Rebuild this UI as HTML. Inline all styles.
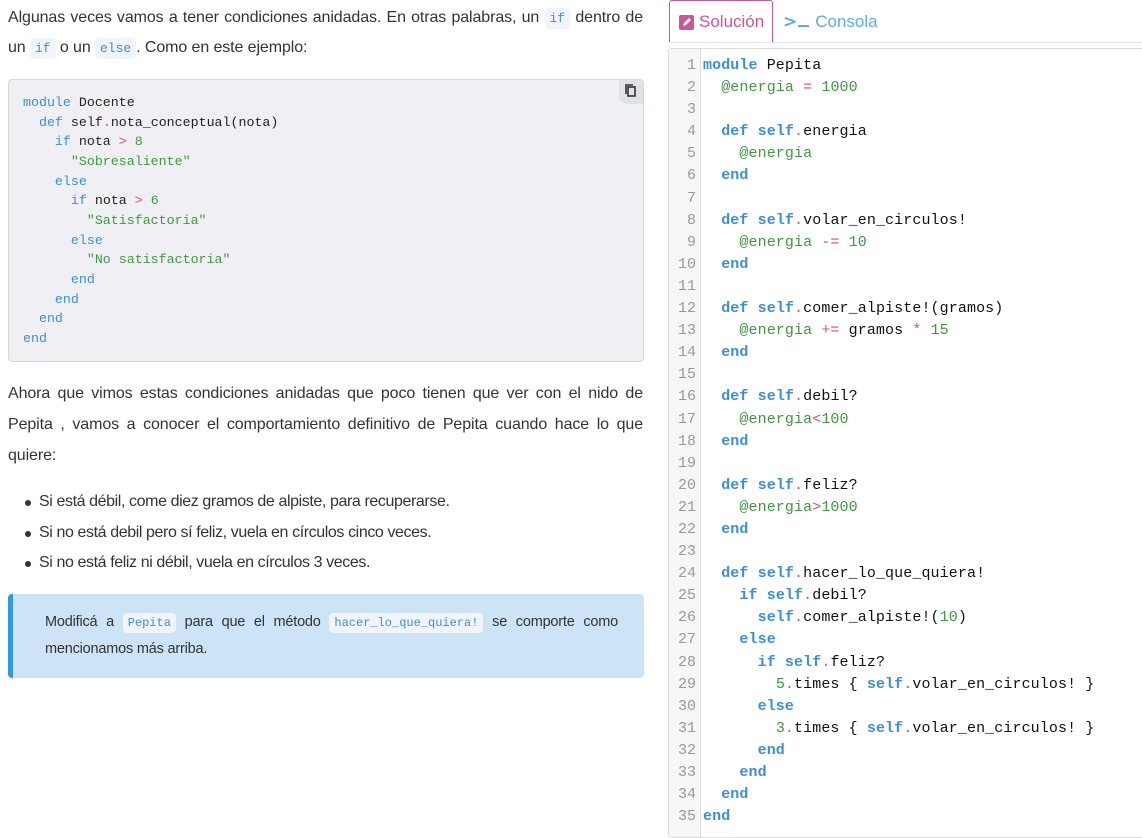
<!DOCTYPE html>
<html><head><meta charset="utf-8"><style>
*{margin:0;padding:0;box-sizing:border-box}
body{width:1142px;height:826px;overflow:hidden;background:#fff;font-family:"Liberation Sans",sans-serif;color:#333;position:relative}
.l{position:absolute;left:8px;width:635px;font-size:16px;letter-spacing:-0.1px;white-space:nowrap;line-height:20px}
.j{text-align:justify;text-align-last:justify;white-space:normal}
code.i{font-family:"Liberation Mono",monospace;font-size:13px;color:#3a8fd8;background:#f1f4f9;padding:3px 5px;border-radius:4px;letter-spacing:0}
.cb{position:absolute;left:8px;top:79px;width:636px;height:283px;background:#f0f0f4;border:1px solid #d6d8dc;border-radius:4px}
.cb pre{position:absolute;left:14px;top:13px;font-family:"Liberation Mono",monospace;font-size:13.3px;line-height:19.67px;color:#222}
.k{color:#3a8fd8}.s{color:#3d9a3d}.o{color:#e8457a}.n{color:#3d9a3d}
.ed pre .k{font-weight:bold}
.copy{position:absolute;right:0;top:0;width:24px;height:24px;background:#dfe2e6;border-bottom-left-radius:8px}
ul{position:absolute;left:24px;top:491px;list-style:none}
ul li{font-size:16px;letter-spacing:-0.4px;height:30.5px;line-height:22px;position:relative;padding-left:15px}
ul li:before{content:"";position:absolute;left:1px;top:9px;width:6px;height:6px;border-radius:50%;background:#333}
.call{position:absolute;left:8px;top:594px;width:636px;height:84px;background:#cce4f6;border-left:5px solid #3498db;border-radius:4px}
.call .t{position:absolute;left:32px;width:573px;font-size:14.5px;letter-spacing:-0.2px;color:#333}
.tab{position:absolute;left:669px;top:0;width:104px;height:43px;border:1px solid #c9579a;border-top-left-radius:3px;border-top-right-radius:3px;color:#c9579a;font-size:17px;background:#fff}
.hl{position:absolute;left:669px;right:0;top:42px;height:1px;background:#e5e5e5}
.ed{position:absolute;left:668px;top:48px;width:480px;height:790px;border:1px solid #ddd;border-radius:3px;background:#fff}
.gut{position:absolute;left:0;top:0;width:32px;height:100%;background:#f7f7f7;border-right:1px solid #ddd}
.gut pre{font-family:"Liberation Mono",monospace;font-size:15px;line-height:22.1px;color:#999;text-align:right;padding-right:4px;position:absolute;right:0;top:6px}
.ed>pre{position:absolute;left:34px;top:6px;font-family:"Liberation Mono",monospace;font-size:15px;letter-spacing:0.1px;line-height:22.1px;color:#111}
</style></head><body>
<div class="l j" style="top:8px">Algunas veces vamos a tener condiciones anidadas. En otras palabras, un <code class="i">if</code> dentro de</div>
<div class="l" style="top:38px">un <code class="i">if</code> o un <code class="i">else</code>. Como en este ejemplo:</div>
<div class="cb"><div class="copy"><svg width="24" height="24" viewBox="0 0 24 24"><rect x="9" y="7" width="7" height="9" fill="none" stroke="#333" stroke-width="1.6"/><path d="M7 14V5h7" fill="none" stroke="#333" stroke-width="1.6"/></svg></div>
<pre><span class="k">module</span> Docente
  <span class="k">def</span> self<span class="o">.</span>nota_conceptual(nota)
    <span class="k">if</span> nota <span class="o">&gt;</span> <span class="n">8</span>
      <span class="s">"Sobresaliente"</span>
    <span class="k">else</span>
      <span class="k">if</span> nota <span class="o">&gt;</span> <span class="n">6</span>
        <span class="s">"Satisfactoria"</span>
      <span class="k">else</span>
        <span class="s">"No satisfactoria"</span>
      <span class="k">end</span>
    <span class="k">end</span>
  <span class="k">end</span>
<span class="k">end</span></pre></div>
<div class="l j" style="top:384px">Ahora que vimos estas condiciones anidadas que poco tienen que ver con el nido de</div>
<div class="l j" style="top:415px">Pepita , vamos a conocer el comportamiento definitivo de Pepita cuando hace lo que</div>
<div class="l" style="top:446px">quiere:</div>
<ul><li>Si está débil, come diez gramos de alpiste, para recuperarse.</li><li>Si no está debil pero sí feliz, vuela en círculos cinco veces.</li><li>Si no está feliz ni débil, vuela en círculos 3 veces.</li></ul>
<div class="call"><div class="t" style="top:20px;text-align:justify;text-align-last:justify">Modificá a <code class="i" style="font-size:12px">Pepita</code> para que el método <code class="i" style="font-size:12px">hacer_lo_que_quiera!</code> se comporte como</div><div class="t" style="top:47px">mencionamos más arriba.</div></div>
<div class="tab"><svg style="position:absolute;left:9px;top:14px" width="15" height="15" viewBox="0 0 15 15"><rect width="15" height="15" rx="2" fill="#c9579a"/><path d="M4 11l1-3 5-5 2 2-5 5z" fill="#fff"/></svg><span style="position:absolute;left:29px;top:11px">Solución</span></div>
<div style="position:absolute;left:783px;top:12px;color:#5dade2;font-size:17px"><span style="font-weight:bold;font-family:'DejaVu Sans',sans-serif">&gt;</span><span style="display:inline-block;width:11px;height:2px;background:#5dade2;margin:0 6px 0 1px"></span>Consola</div>
<div class="hl"></div>
<div class="ed"><div class="gut"><pre>1
2
3
4
5
6
7
8
9
10
11
12
13
14
15
16
17
18
19
20
21
22
23
24
25
26
27
28
29
30
31
32
33
34
35</pre></div>
<pre><span class="k">module</span> Pepita
  <span class="s">@energia</span> <span class="o">=</span> <span class="n">1000</span>

  <span class="k">def</span> <span class="k">self</span><span class="o">.</span>energia
    <span class="s">@energia</span>
  <span class="k">end</span>

  <span class="k">def</span> <span class="k">self</span><span class="o">.</span>volar_en_circulos!
    <span class="s">@energia</span> <span class="o">-=</span> <span class="n">10</span>
  <span class="k">end</span>

  <span class="k">def</span> <span class="k">self</span><span class="o">.</span>comer_alpiste!(gramos)
    <span class="s">@energia</span> <span class="o">+=</span> gramos <span class="o">*</span> <span class="n">15</span>
  <span class="k">end</span>

  <span class="k">def</span> <span class="k">self</span><span class="o">.</span>debil?
    <span class="s">@energia</span><span class="o">&lt;</span><span class="n">100</span>
  <span class="k">end</span>

  <span class="k">def</span> <span class="k">self</span><span class="o">.</span>feliz?
    <span class="s">@energia</span><span class="o">&gt;</span><span class="n">1000</span>
  <span class="k">end</span>

  <span class="k">def</span> <span class="k">self</span><span class="o">.</span>hacer_lo_que_quiera!
    <span class="k">if</span> <span class="k">self</span><span class="o">.</span>debil?
      <span class="k">self</span><span class="o">.</span>comer_alpiste!(<span class="n">10</span>)
    <span class="k">else</span>
      <span class="k">if</span> <span class="k">self</span><span class="o">.</span>feliz?
        <span class="n">5</span><span class="o">.</span>times { <span class="k">self</span><span class="o">.</span>volar_en_circulos! }
      <span class="k">else</span>
        <span class="n">3</span><span class="o">.</span>times { <span class="k">self</span><span class="o">.</span>volar_en_circulos! }
      <span class="k">end</span>
    <span class="k">end</span>
  <span class="k">end</span>
<span class="k">end</span></pre></div>
</body></html>
